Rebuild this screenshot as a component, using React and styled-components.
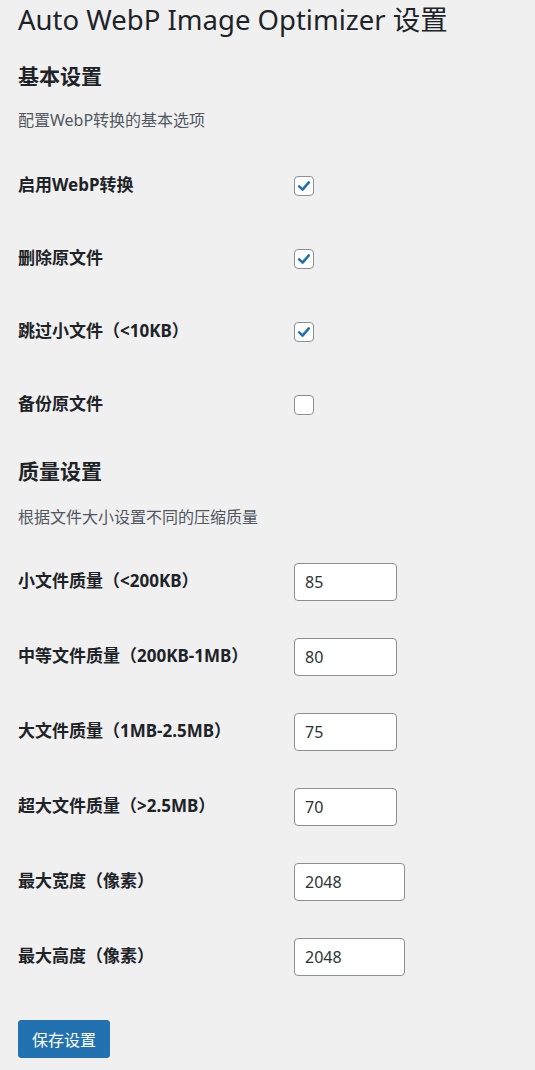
import React from "react";
import styled, { createGlobalStyle } from "styled-components";

const GlobalStyle = createGlobalStyle`
  html, body {
    margin: 0;
    padding: 0;
    background: #f0f0f1;
  }
  body {
    font-family: "Segoe UI", "Noto Sans", "Noto Sans CJK SC", sans-serif;
    color: #1d2327;
  }
`;

const basicOptions = [
  { label: "启用WebP转换", checked: true },
  { label: "删除原文件", checked: true },
  { label: "跳过小文件（<10KB）", checked: true },
  { label: "备份原文件", checked: false },
];

const qualityOptions = [
  { label: "小文件质量（<200KB）", value: "85", wide: false },
  { label: "中等文件质量（200KB-1MB）", value: "80", wide: false },
  { label: "大文件质量（1MB-2.5MB）", value: "75", wide: false },
  { label: "超大文件质量（>2.5MB）", value: "70", wide: false },
  { label: "最大宽度（像素）", value: "2048", wide: true },
  { label: "最大高度（像素）", value: "2048", wide: true },
];

function CheckBox({ checked }) {
  return (
    <Box>
      {checked && (
        <svg width="16" height="16" viewBox="0 0 16 16">
          <path d="M3.2 8.4 L6.6 11.6 L12.8 4.4" fill="none" stroke="#2271b1" strokeWidth="2.6" strokeLinecap="round" strokeLinejoin="round" />
        </svg>
      )}
    </Box>
  );
}

export default function App() {
  return (
    <>
      <GlobalStyle />
      <Wrap>
        <Title>Auto WebP Image Optimizer 设置</Title>

        <SectionTitle>基本设置</SectionTitle>
        <Description>配置WebP转换的基本选项</Description>
        <FormTable>
          {basicOptions.map((opt) => (
            <Row key={opt.label} $height={73}>
              <Label>{opt.label}</Label>
              <CheckBox checked={opt.checked} />
            </Row>
          ))}
        </FormTable>

        <SectionTitle $top={17}>质量设置</SectionTitle>
        <Description $top={20}>根据文件大小设置不同的压缩质量</Description>
        <FormTable $top={14}>
          {qualityOptions.map((opt) => (
            <Row key={opt.label} $height={75}>
              <Label>{opt.label}</Label>
              <NumberInput type="number" defaultValue={opt.value} $wide={opt.wide} />
            </Row>
          ))}
        </FormTable>

        <SaveButton>保存设置</SaveButton>
      </Wrap>
    </>
  );
}

const Wrap = styled.div`
  padding: 0 18px 14px;
`;

const Title = styled.h1`
  margin: 0;
  font-size: 27.5px;
  font-weight: 400;
  line-height: 40px;
  color: #1d2327;
`;

const SectionTitle = styled.h2`
  margin: ${({ $top }) => $top ?? 22}px 0 0;
  font-size: 21px;
  font-weight: 700;
  line-height: 28px;
  color: #1d2327;
`;

const Description = styled.p`
  margin: ${({ $top }) => $top ?? 18}px 0 0;
  font-size: 16px;
  line-height: 24px;
  color: #50575e;
`;

const FormTable = styled.div`
  margin-top: ${({ $top }) => $top ?? 16}px;
  display: flex;
  flex-direction: column;
`;

const Row = styled.div`
  display: grid;
  grid-template-columns: 276px 1fr;
  align-items: center;
  height: ${({ $height }) => $height}px;
`;

const Label = styled.div`
  font-size: 17px;
  font-weight: 700;
  line-height: 22px;
  color: #1d2327;
`;

const Box = styled.div`
  width: 20px;
  height: 20px;
  box-sizing: border-box;
  border: 1px solid #8c8f94;
  border-radius: 4px;
  background: #fff;
  display: flex;
  align-items: center;
  justify-content: center;
  margin-top: 2px;
`;

const NumberInput = styled.input`
  width: ${({ $wide }) => ($wide ? 111 : 103)}px;
  height: 38px;
  box-sizing: border-box;
  padding: 0 10px;
  border: 1px solid #8c8f94;
  border-radius: 4px;
  background: #fff;
  font-family: inherit;
  font-size: 16px;
  color: #2c3338;
  outline: none;
  margin-top: 2px;
  -moz-appearance: textfield;

  &::-webkit-outer-spin-button,
  &::-webkit-inner-spin-button {
    -webkit-appearance: none;
    margin: 0;
  }
`;

const SaveButton = styled.button`
  margin-top: 27px;
  width: 92px;
  height: 38px;
  padding: 0;
  border: 1px solid #2271b1;
  border-radius: 3px;
  background: #2271b1;
  color: #fff;
  font-family: inherit;
  font-size: 16px;
  cursor: pointer;
`;
